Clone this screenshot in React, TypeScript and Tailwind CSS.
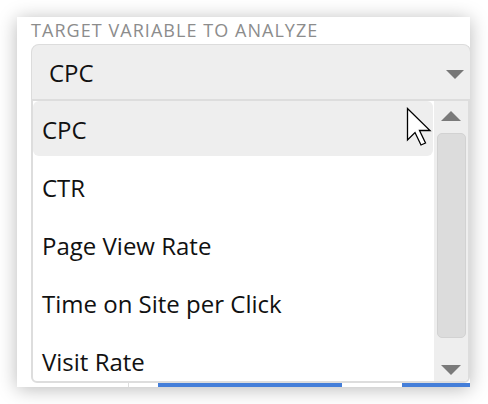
import React from "react";

const items = ["CPC", "CTR", "Page View Rate", "Time on Site per Click", "Visit Rate"];

function Tri({ up }: { up?: boolean }) {
  return (
    <svg width="20" height="10" viewBox="0 0 20 10" className="block">
      {up ? <polygon points="10,0 20,10 0,10" fill="#7a7a7a" /> : <polygon points="0,0 20,0 10,10" fill="#7a7a7a" />}
    </svg>
  );
}

export default function App() {
  return (
    <div className="relative w-[488px] h-[404px] bg-white pt-[17px] pl-[17px]" style={{ fontFamily: '"Open Sans", sans-serif' }}>
      <div className="w-[453px] h-[370px] bg-white overflow-hidden flex flex-col shadow-[0_2px_18px_rgba(0,0,0,0.28)]">
        <div className="pt-[4px] pl-[14px] text-[18px] leading-[18px] tracking-[1.05px] text-[#8c8c8c] whitespace-nowrap">TARGET VARIABLE TO ANALYZE</div>
        <div className="mt-[5px] ml-[14px] w-[440px] h-[55px] shrink-0 bg-[#eeeeee] border border-b-0 border-[#dcdcdc] rounded-t-[8px] flex items-center pl-[17px] pr-[6px]">
          <span className="text-[24px] text-[#111] flex-1 pt-[2px]">CPC</span>
          <svg width="18" height="9" viewBox="0 0 18 9" className="block mt-[5px]">
            <polygon points="0,0 18,0 9,9" fill="#777" />
          </svg>
        </div>
        <div className="ml-[14px] w-[439px] h-[284px] shrink-0 border-2 border-[#dddddd] rounded-b-[6px] flex overflow-hidden bg-white">
          <div className="flex-1 flex flex-col overflow-hidden">
            {items.map((it, i) => (
              <div
                key={it}
                className={
                  "h-[55px] mb-[3px] shrink-0 flex items-center pl-[9px] mr-[1px] rounded-[6px] text-[24px] text-[#111] whitespace-nowrap " +
                  (i === 0 ? "bg-[#eeeeee]" : "")
                }
              >
                <span className="pt-[2px]">{it}</span>
              </div>
            ))}
          </div>
          <div className="w-[34px] bg-[#eeeeee] flex flex-col items-center">
            <div className="mt-[10px]"><Tri up /></div>
            <div className="mt-[12px] w-[29px] h-[205px] bg-[#dcdcdc] border border-[#d2d2d2] rounded-[5px]" />
            <div className="mt-[27px]"><Tri /></div>
          </div>
        </div>
        <div className="h-[4px] flex shrink-0">
          <div className="w-[111px]" />
          <div className="w-[1px] bg-[#dddddd]" />
          <div className="w-[29px]" />
          <div className="w-[184px] bg-[#447ed9]" />
          <div className="w-[60px]" />
          <div className="flex-1 bg-[#447ed9]" />
        </div>
      </div>
      <svg className="absolute left-[406px] top-[107px]" width="28" height="40" viewBox="0 0 28 40">
        <path d="M1.5 1.5 L1.5 33 L9 25.5 L15 38 L19.5 36 L13.5 23.5 L24 23.5 Z" fill="white" stroke="black" strokeWidth="1.3" strokeLinejoin="miter" />
      </svg>
    </div>
  );
}
